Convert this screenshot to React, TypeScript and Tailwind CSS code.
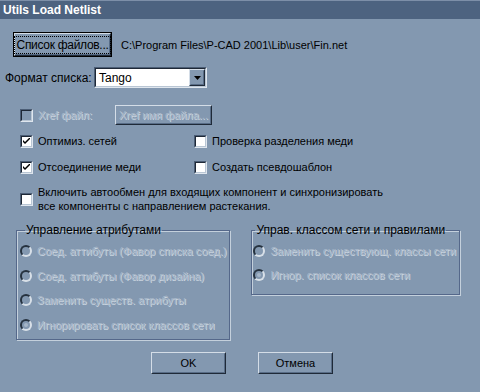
import React from 'react';

const disabledText = 'text-[#a6b6c8] [text-shadow:1px_1px_0_#c9d4df]';

const CheckBox: React.FC<{ checked?: boolean; disabled?: boolean }> = ({ checked, disabled }) => (
  <span
    className={`flex h-[13px] w-[13px] shrink-0 items-center justify-center border border-t-[#4b5d75] border-l-[#4b5d75] border-b-[#dfe6ee] border-r-[#dfe6ee] ${
      disabled ? 'bg-[#8398b0]' : 'bg-white'
    }`}
  >
    <span className="flex h-full w-full items-center justify-center border border-t-[#1e2836] border-l-[#1e2836] border-b-[#b9c6d4] border-r-[#b9c6d4]">
      {checked && (
        <svg width="7" height="7" viewBox="0 0 7 7">
          <path d="M0 2 L0 4 L2 6 L7 1 L7 -1 L2 4 Z" fill="#000" />
        </svg>
      )}
    </span>
  </span>
);

const Radio: React.FC<{ checked?: boolean }> = ({ checked }) => (
  <span className="flex h-[12px] w-[12px] shrink-0 items-center justify-center rounded-full border-2 border-t-[#26323f] border-l-[#26323f] border-b-[#d8e0e8] border-r-[#d8e0e8] bg-[#8398b0]">
    {checked && <span className="h-[4px] w-[4px] rounded-full bg-[#a6b6c8]" />}
  </span>
);

const Button: React.FC<{ children: React.ReactNode; className?: string; disabled?: boolean }> = ({
  children,
  className = '',
  disabled,
}) => (
  <div
    className={`flex items-center justify-center border border-t-[#d4dde7] border-l-[#d4dde7] border-b-[#1f2a38] border-r-[#1f2a38] bg-[#8398b0] ${className}`}
  >
    <div
      className={`flex h-full w-full items-center justify-center whitespace-nowrap border border-t-[#8398b0] border-l-[#8398b0] border-b-[#586c86] border-r-[#586c86] ${
        disabled ? disabledText : 'text-black'
      }`}
    >
      {children}
    </div>
  </div>
);

const Row: React.FC<{ children: React.ReactNode; disabled?: boolean; checked?: boolean }> = ({
  children,
  disabled,
  checked,
}) => (
  <div className="flex h-[20px] items-center gap-[5px] whitespace-nowrap">
    <CheckBox checked={checked} disabled={disabled} />
    <span className={disabled ? disabledText : 'text-black'}>{children}</span>
  </div>
);

const RadioRow: React.FC<{ children: React.ReactNode; checked?: boolean }> = ({ children, checked }) => (
  <div className="flex h-[20px] items-center gap-[5px] whitespace-nowrap">
    <Radio checked={checked} />
    <span className={disabledText}>{children}</span>
  </div>
);

export default function App() {
  return (
    <div
      className="flex h-[392px] w-[480px] flex-col overflow-hidden bg-[#8398b0] text-[11px] leading-[14px] text-black"
      style={{ fontFamily: '"Liberation Sans", Arial, sans-serif' }}
    >
      <div className="flex h-[19px] items-center border-t border-t-[#7d8fa8] bg-[#4d6380] pl-[3px] text-[12px] font-bold text-white">
        Utils Load Netlist
      </div>

      <div className="mt-[13px] flex h-[25px] items-center">
        <div className="ml-[13px] h-[25px] w-[99px] border border-black">
          <Button className="h-full w-full">
            <span className="border border-dotted border-black px-[2px] py-[1px] text-[12px] leading-[14px] tracking-[-0.3px]">
              Список файлов...
            </span>
          </Button>
        </div>
        <span className="ml-[9px]">C:\Program Files\P-CAD 2001\Lib\user\Fin.net</span>
      </div>

      <div className="mt-[10px] flex h-[21px] items-center">
        <span className="ml-[5px] w-[89px] text-[12px]">Формат списка:</span>
        <div className="flex h-[21px] w-[113px] border border-t-[#4b5d75] border-l-[#4b5d75] border-b-[#dfe6ee] border-r-[#dfe6ee]">
          <div className="flex flex-1 items-center border border-t-[#1e2836] border-l-[#1e2836] border-b-[#b9c6d4] border-r-[#b9c6d4] bg-white">
            <span className="flex-1 pl-[3px] text-[12px]">Tango</span>
            <Button className="h-[17px] w-[16px]">
              <svg width="7" height="4" viewBox="0 0 7 4">
                <path d="M0 0 H7 L3.5 4 Z" fill="#000" />
              </svg>
            </Button>
          </div>
        </div>
      </div>

      <div className="mt-[17px] flex h-[20px] items-center pl-[20px]">
        <div className="w-[95px]">
          <Row disabled>Xref файл:</Row>
        </div>
        <Button className="h-[20px] w-[97px]" disabled>
          Xref имя файла...
        </Button>
      </div>

      <div className="mt-[6px] grid grid-cols-[174px_1fr] pl-[20px]">
        <Row checked>Оптимиз. сетей</Row>
        <Row>Проверка разделения меди</Row>
      </div>
      <div className="mt-[6px] grid grid-cols-[174px_1fr] pl-[20px]">
        <Row checked>Отсоединение меди</Row>
        <Row>Создать псевдошаблон</Row>
      </div>

      <div className="mt-[8px] flex items-center gap-[5px] pl-[20px]">
        <CheckBox />
        <span>
          Включить автообмен для входящих компонент и синхронизировать
          <br />
          все компоненты с направлением растекания.
        </span>
      </div>

      <div className="mt-[10px] flex items-start">
        <fieldset className="ml-[16px] h-[117px] w-[210px] border border-[#55688a] px-[3px] pt-[4px] shadow-[inset_1px_1px_0_#c4d0dc,1px_1px_0_#c4d0dc]">
          <legend className="ml-[5px] px-[1px] text-[12px] leading-[14px]">Управление атрибутами</legend>
          <div className="flex flex-col gap-[4.5px]">
            <RadioRow>Соед. аттибуты (Фавор списка соед.)</RadioRow>
            <RadioRow>Соед. аттибуты (Фавор дизайна)</RadioRow>
            <RadioRow>Заменить существ. атрибуты</RadioRow>
            <RadioRow checked>Игнорировать список классов сети</RadioRow>
          </div>
        </fieldset>
        <fieldset className="ml-[21px] h-[72px] w-[209px] border border-[#55688a] px-[1px] pt-[4px] shadow-[inset_1px_1px_0_#c4d0dc,1px_1px_0_#c4d0dc]">
          <legend className="ml-[2px] px-[1px] text-[12px] leading-[14px]">Управ. классом сети и правилами</legend>
          <div className="flex flex-col gap-[4px]">
            <RadioRow>Заменить существующ. классы сети</RadioRow>
            <RadioRow checked>Игнор. список классов сети</RadioRow>
          </div>
        </fieldset>
      </div>

      <div className="mt-[12px] flex">
        <Button className="ml-[151px] h-[22px] w-[75px]">OK</Button>
        <Button className="ml-[32px] h-[22px] w-[75px]">Отмена</Button>
      </div>
    </div>
  );
}
